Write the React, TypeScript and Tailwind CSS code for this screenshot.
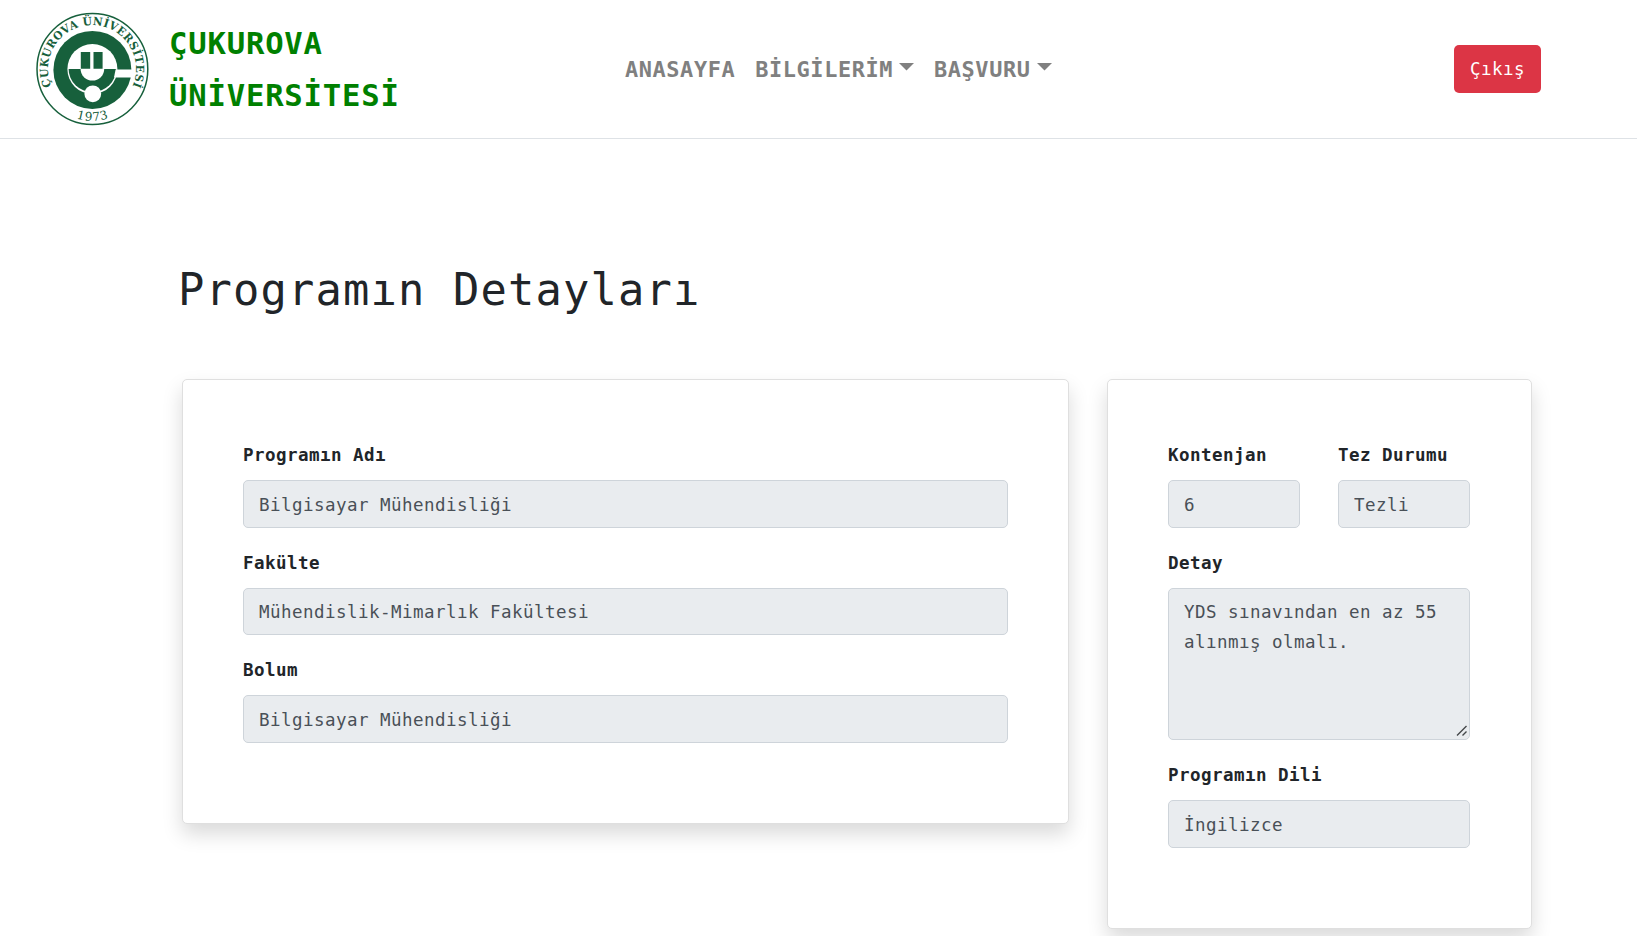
import React from "react";

const MONO = "font-['DejaVu_Sans_Mono','Liberation_Mono',monospace]";

function Logo() {
  return (
    <svg width="114" height="114" viewBox="-57 -57 114 114" className="shrink-0">
      <defs>
        <path id="nameArc" d="M -40.6 17 A 44 44 0 1 1 40.2 18" />
        <path id="yearArc" d="M -30 42.3 A 51.9 51.9 0 0 0 30 42.3" />
      </defs>
      <circle r="55.4" cx="0.4" fill="#fff" stroke="#17603c" strokeWidth="1.5" />
      <circle r="39" cx="0.4" cy="0.9" fill="#17603c" />
      <circle r="25" cx="0.4" cy="0" fill="#fff" />
      <path d="M -23.4 0 H 24.2 A 23.8 23 0 0 1 -23.4 0 Z" fill="#17603c" />
      <path d="M -11.4 0 H 12.2 A 11.8 11.6 0 0 1 -11.4 0 Z" fill="#fff" />
      <path d="M 23.6 0.6 H 42 V 8.4 H 22 Z" fill="#fff" />
      <circle r="8.4" cx="0.8" cy="24.8" fill="#fff" />
      <path d="M -11.2 -17 H -1.8 V -0.3 H -11.2 Z M 1.5 -17 H 10.6 V -0.3 H 1.5 Z" fill="#17603c" />
      <text className="font-['DejaVu_Serif',serif] text-[11.2px] font-bold" fill="#17603c">
        <textPath href="#nameArc" textLength="173" lengthAdjust="spacingAndGlyphs">ÇUKUROVA ÜNİVERSİTESİ</textPath>
      </text>
      <text className="font-['DejaVu_Serif',serif] text-[12px]" fill="#17603c">
        <textPath href="#yearArc" startOffset="51%" textAnchor="middle" textLength="33">1973</textPath>
      </text>
    </svg>
  );
}

function Caret() {
  return (
    <svg width="15" height="8" viewBox="0 0 15 8" className="mb-1.5 ml-[6px]" fill="currentColor">
      <path d="M0 0H15L7.5 7.5Z" />
    </svg>
  );
}

function Field({ label, value }: { label: string; value: string }) {
  return (
    <label className="mb-5 block min-w-0">
      <span className="mb-2.5 block h-[30px] font-bold leading-[30px]">{label}</span>
      <input
        readOnly
        value={value}
        className="block h-[47.5px] w-full rounded-[5px] border border-[#ced4da] bg-[#e9ecef] px-[15px] pt-[2px] text-[#495057] outline-none [letter-spacing:inherit]"
      />
    </label>
  );
}

const CARD = "rounded-[5px] border border-[#dfdfdf] bg-white py-[60px] pl-[60px] shadow-[0_10px_20px_rgba(0,0,0,0.15)]";

export default function App() {
  return (
    <div className={`${MONO} h-[936px] overflow-hidden bg-white text-[17.5px] tracking-[0.464px] text-[#212529]`}>
      <header className="flex h-[139px] items-center border-b border-[#dee2e6] pl-[35px] pr-[96px]">
        <Logo />
        <div className="ml-[20px] w-[456px] pt-[2px] text-[30.6px] font-bold leading-[52px] tracking-[0.81px] text-[#008000]">
          ÇUKUROVA
          <br />
          ÜNİVERSİTESİ
        </div>
        <nav className="flex items-center gap-5 pt-[3px] text-[21.9px] font-bold tracking-[0.6px] text-[#808080]">
          <a>ANASAYFA</a>
          <a className="flex items-center">BİLGİLERİM<Caret /></a>
          <a className="flex items-center">BAŞVURU<Caret /></a>
        </nav>
        <button className="ml-auto h-12 w-[87px] rounded-[5px] bg-[#dc3545] text-white">Çıkış</button>
      </header>

      <main className="pl-[182px] pr-[105px] pt-[120px]">
        <h1 className="-ml-1 h-[60px] pt-px text-[43.75px] leading-[60px] tracking-[1.16px]">Programın Detayları</h1>
        <div className="mt-[60px] flex items-start gap-[38px]">
          <section className={`${CARD} w-[887px] pr-[60px]`}>
            <Field label="Programın Adı" value="Bilgisayar Mühendisliği" />
            <Field label="Fakülte" value="Mühendislik-Mimarlık Fakültesi" />
            <Field label="Bolum" value="Bilgisayar Mühendisliği" />
          </section>
          <section className={`${CARD} w-[425px] pr-[61px]`}>
            <div className="grid grid-cols-2 gap-x-[38px]">
              <Field label="Kontenjan" value="6" />
              <Field label="Tez Durumu" value="Tezli" />
            </div>
            <label className="relative mb-5 block">
              <span className="mb-2.5 block h-[30px] font-bold leading-[30px]">Detay</span>
              <textarea
                readOnly
                value="YDS sınavından en az 55 alınmış olmalı."
                className="block h-[152.5px] w-full resize-none overflow-hidden rounded-[5px] border border-[#ced4da] bg-[#e9ecef] pb-[7px] pl-[15px] pr-[10px] pt-[8.5px] leading-[30px] text-[#495057] outline-none [letter-spacing:inherit]"
              />
              <svg width="12" height="12" viewBox="0 0 12 12" className="absolute bottom-[3px] right-[2px]" stroke="#45484b" strokeWidth="1.4">
                <path d="M1 10.5L10.5 1M6.5 10.5L10.5 6.5" />
              </svg>
            </label>
            <Field label="Programın Dili" value="İngilizce" />
          </section>
        </div>
      </main>
    </div>
  );
}
